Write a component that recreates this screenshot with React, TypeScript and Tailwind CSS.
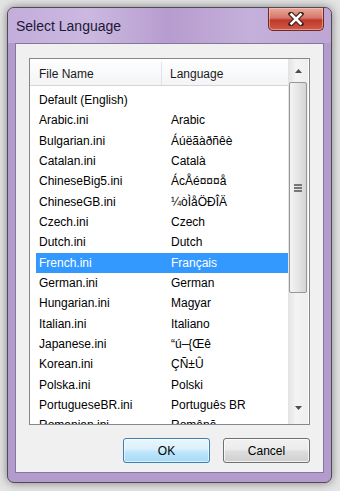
const rows: [string, string][] = [
  ["Default (English)", ""],
  ["Arabic.ini", "Arabic"],
  ["Bulgarian.ini", "Áúëãàðñêè"],
  ["Catalan.ini", "Català"],
  ["ChineseBig5.ini", "ÁcÅé¤¤¤å"],
  ["ChineseGB.ini", "¼òÌåÖÐÎÄ"],
  ["Czech.ini", "Czech"],
  ["Dutch.ini", "Dutch"],
  ["French.ini", "Français"],
  ["German.ini", "German"],
  ["Hungarian.ini", "Magyar"],
  ["Italian.ini", "Italiano"],
  ["Japanese.ini", "“ú–{Œê"],
  ["Korean.ini", "ÇÑ±Û"],
  ["Polska.ini", "Polski"],
  ["PortugueseBR.ini", "Português BR"],
  ["Romanian.ini", "Română"],
];

const SELECTED = 8;

function CloseButton() {
  return (
    <div className="flex h-[23px] w-[56px] items-center justify-center rounded-b-[5px] border border-t-0 border-[#6b2a22] bg-[linear-gradient(to_bottom,#e9a99b_0%,#d5776a_45%,#c0392b_55%,#cf5a45_100%)] shadow-[inset_0_0_0_1px_rgba(255,210,200,0.5)]">
      <svg width="16" height="14" viewBox="0 0 16 14">
        <path d="M3 2 L13 12 M13 2 L3 12" stroke="#4a1f1a" strokeWidth="5" strokeLinecap="square" />
        <path d="M3.5 2.5 L12.5 11.5 M12.5 2.5 L3.5 11.5" stroke="#ffffff" strokeWidth="2.6" strokeLinecap="square" />
      </svg>
    </div>
  );
}

function Scrollbar() {
  return (
    <div className="flex w-[20px] flex-col bg-[linear-gradient(to_right,#e3e3e3,#f4f4f4_40%,#eeeeee)]">
      <div className="flex h-[23px] items-center justify-center">
        <svg width="7" height="4" viewBox="0 0 7 4">
          <path d="M0 4 L3.5 0 L7 4 Z" fill="#4d4d4d" />
        </svg>
      </div>
      <div className="mx-[1px] flex h-[211px] items-center justify-center rounded-[2px] border border-[#979797] bg-[linear-gradient(to_right,#f4f4f4,#e6e6e6_50%,#d4d4d4)]">
        <div className="flex flex-col gap-[1px]">
          <div className="h-[2px] w-[8px] border-y border-[#777] bg-[#ccc]" />
          <div className="h-[2px] w-[8px] border-y border-[#777] bg-[#ccc]" />
          <div className="h-[2px] w-[8px] border-y border-[#777] bg-[#ccc]" />
        </div>
      </div>
      <div className="flex-1" />
      <div className="flex h-[20px] items-start justify-center pt-[2px]">
        <svg width="7" height="4" viewBox="0 0 7 4">
          <path d="M0 0 L7 0 L3.5 4 Z" fill="#4d4d4d" />
        </svg>
      </div>
    </div>
  );
}

export default function App() {
  return (
    <div
      className="h-[491px] w-[340px] overflow-hidden bg-[#e4e4e4] pl-[7px] pt-[7px]"
      style={{ fontFamily: '"Liberation Sans", Arial, sans-serif' }}
    >
      <div className="flex h-[476px] w-[325px] flex-col rounded-[7px] border border-[#4f4a55] bg-[#b49bcd] shadow-[0_0_10px_rgba(0,0,0,0.45)]">
        <div className="flex h-[35px] items-start justify-between rounded-t-[6px] bg-[linear-gradient(to_right,#c3addb_0%,#cbb9e0_25%,#b79ccf_50%,#c4b0da_75%,#bda6d4_100%)] pl-[8px] pr-[7px]">
          <span className="pt-[10px] text-[14px] leading-[16px] text-[#1c1838]">Select Language</span>
          <CloseButton />
        </div>
        <div className="mx-[7px] flex h-[430px] flex-col border border-[#84779a] bg-[#f0f0f0] px-[13px] pt-[14px]">
          <div className="flex h-[367px] overflow-hidden border border-[#828790] bg-white">
            <div className="flex w-[258px] flex-col overflow-hidden">
              <div className="flex h-[27px] shrink-0 items-center border-b border-[#d5d5d5] bg-[linear-gradient(to_bottom,#ffffff,#f3f4f6)] pt-[3px] text-[12px] text-[#1a1a1a]">
                <div className="flex h-full w-[132px] items-center border-r border-[#e2e3e5] pl-[9px]">File Name</div>
                <div className="pl-[8px]">Language</div>
              </div>
              <div className="flex flex-col pl-[6px] pt-[4px]">
                {rows.map(([file, lang], i) => (
                  <div
                    key={file}
                    className={
                      "flex h-[20.33px] shrink-0 items-center pl-[3px] text-[12px] " +
                      (i === SELECTED ? "bg-[#3399ff] text-white" : "text-black")
                    }
                  >
                    <span className="w-[132px] whitespace-nowrap">{file}</span>
                    <span className="whitespace-nowrap">{lang}</span>
                  </div>
                ))}
              </div>
            </div>
            <Scrollbar />
          </div>
          <div className="mt-[13px] flex justify-end gap-[13px] pr-0">
            <button className="flex h-[25px] w-[87px] items-center justify-center rounded-[3px] border border-[#3c7fb1] bg-[linear-gradient(to_bottom,#eaf6fd_0%,#d9f0fc_45%,#bee6fd_55%,#a7d9f5_100%)] text-[12px] text-black shadow-[inset_0_0_0_1px_rgba(255,255,255,0.6)]">
              OK
            </button>
            <button className="flex h-[25px] w-[87px] items-center justify-center rounded-[3px] border border-[#707070] bg-[linear-gradient(to_bottom,#f2f2f2_0%,#ebebeb_45%,#dddddd_55%,#cfcfcf_100%)] text-[12px] text-black shadow-[inset_0_0_0_1px_rgba(255,255,255,0.7)]">
              Cancel
            </button>
          </div>
        </div>
      </div>
    </div>
  );
}
